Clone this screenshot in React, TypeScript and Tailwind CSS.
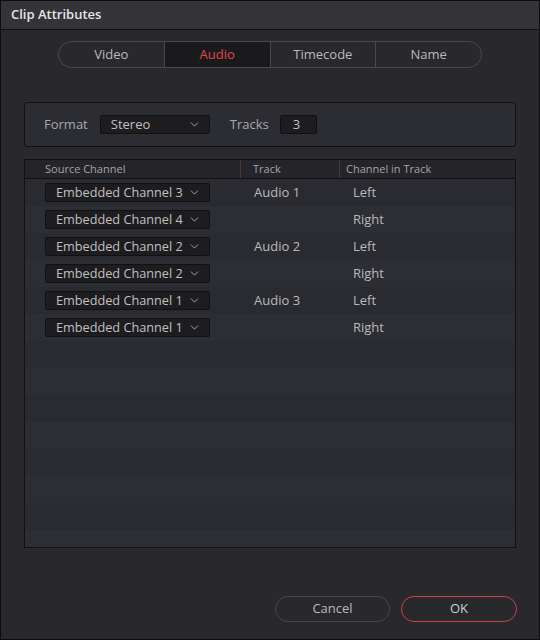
import { ChevronDown } from "lucide-react";

const rows = [
  { src: "Embedded Channel 3", track: "Audio 1", ch: "Left" },
  { src: "Embedded Channel 4", track: "", ch: "Right" },
  { src: "Embedded Channel 2", track: "Audio 2", ch: "Left" },
  { src: "Embedded Channel 2", track: "", ch: "Right" },
  { src: "Embedded Channel 1", track: "Audio 3", ch: "Left" },
  { src: "Embedded Channel 1", track: "", ch: "Right" },
];

const tabs = ["Video", "Audio", "Timecode", "Name"];

function Select({ label, width }: { label: string; width: string }) {
  return (
    <div
      className={`${width} h-[19px] flex items-center justify-between pl-[10px] pr-[8px] bg-[#1d1d20] border border-[#111113] rounded-[2px] text-[#c0c0c0]`}
    >
      <span>{label}</span>
      <ChevronDown className="w-[13px] h-[13px] text-[#b8b8b8]" strokeWidth={1.6} />
    </div>
  );
}

export default function App() {
  const filler = Array.from({ length: 8 });
  return (
    <div
      className="w-[540px] h-[640px] flex flex-col bg-[#28282d] border border-[#0d0d0f] text-[13px] text-[#bababa]"
      style={{ fontFamily: '"Open Sans", "Noto Sans", sans-serif' }}
    >
      <div className="h-[29px] shrink-0 flex items-center pl-[10px] bg-[#333338] border-b border-[#111113] font-semibold text-[13px] text-[#e6e6e6]">
        Clip Attributes
      </div>

      <div className="flex justify-center mt-[11px]">
        <div className="flex w-[424px] h-[27px] rounded-full border border-[#48484e] overflow-hidden">
          {tabs.map((t, i) => (
            <div
              key={t}
              className={`flex-1 flex items-center justify-center ${i > 0 ? "border-l border-[#48484e]" : ""} ${
                t === "Audio" ? "bg-[#1a1a1d] text-[#e2474b]" : "text-[#bababa]"
              }`}
            >
              {t}
            </div>
          ))}
        </div>
      </div>

      <div className="mx-[23px] mt-[34px] h-[45px] shrink-0 flex items-center pl-[19px] bg-[#2c2d32] border border-[#111113] rounded-[3px]">
        <span className="text-[#a8a8a8] mr-[12px]">Format</span>
        <Select label="Stereo" width="w-[110px]" />
        <span className="text-[#a8a8a8] ml-[20px] mr-[11px]">Tracks</span>
        <div className="w-[37px] h-[19px] flex items-center pl-[12px] bg-[#1d1d20] border border-[#111113] rounded-[2px] text-[#c0c0c0]">
          3
        </div>
      </div>

      <div className="mx-[23px] mt-[12px] h-[389px] shrink-0 flex flex-col bg-[#2a2b30] border border-[#111113] overflow-hidden">
        <div className="h-[19px] shrink-0 flex items-center bg-[#242429] border-b border-[#111113] text-[11px] text-[#a4a4a4]">
          <div className="w-[216px] pl-[20px] h-full flex items-center border-r border-[#3a3a40]">Source Channel</div>
          <div className="w-[99px] pl-[12px] h-full flex items-center border-r border-[#3a3a40]">Track</div>
          <div className="pl-[6px]">Channel in Track</div>
        </div>
        {rows.map((r, i) => (
          <div
            key={i}
            className={`h-[27px] shrink-0 flex items-center ${i % 2 === 1 ? "bg-[#2d2e33]" : "bg-[#2a2b30]"}`}
          >
            <div className="w-[216px] pl-[20px] text-[12.7px]">
              <Select label={r.src} width="w-[165px]" />
            </div>
            <div className="w-[99px] pl-[13px]">{r.track}</div>
            <div className="pl-[13px]">{r.ch}</div>
          </div>
        ))}
        {filler.map((_, i) => (
          <div
            key={`f${i}`}
            className={`h-[27px] shrink-0 ${i % 2 === 1 ? "bg-[#2d2e33]" : "bg-[#2a2b30]"}`}
          />
        ))}
      </div>

      <div className="flex justify-end gap-[11px] mt-[48px] mr-[22px]">
        <div className="w-[115px] h-[26px] flex items-center justify-center rounded-full border border-[#46464c] text-[#bababa]">
          Cancel
        </div>
        <div className="w-[116px] h-[26px] flex items-center justify-center rounded-full border border-[#c8434c] text-[#cfcfcf]">
          OK
        </div>
      </div>
    </div>
  );
}
